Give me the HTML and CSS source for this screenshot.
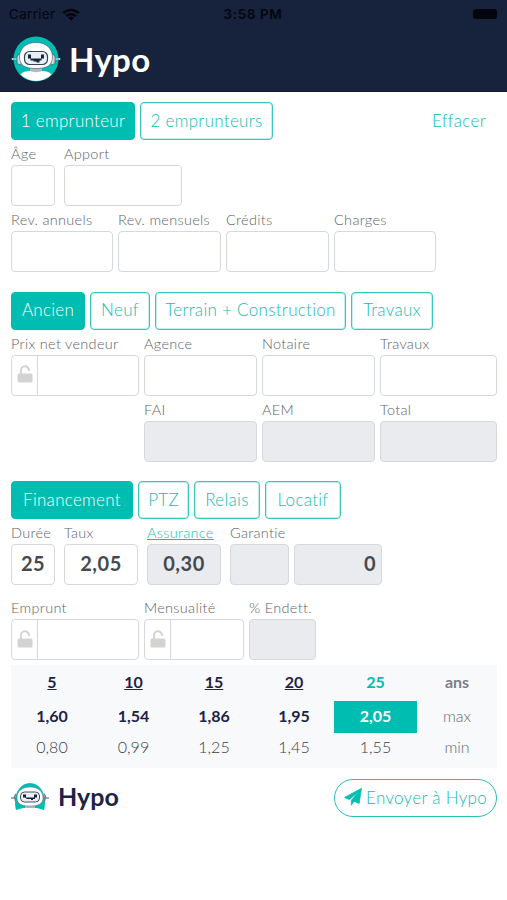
FILE: index.html
```
<!DOCTYPE html>
<html lang="fr">

<head>
    <meta charset="UTF-8">
    <meta name="viewport" content="width=device-width, initial-scale=1.0">
    <title>Hypo</title>
    <link rel="stylesheet" href="styles.css">
</head>

<body>
    <!-- shared icons -->
    <svg class="sprite" width="0" height="0">
        <symbol id="unlock" viewBox="0 0 16 18">
            <path d="M4 9V5.400a4 4 0 0 1 8-.2" fill="none" stroke="currentColor" stroke-width="2" stroke-linecap="round" />
            <rect x=".5" y="8.500" width="15" height="9" rx="1.500" fill="currentColor" />
        </symbol>
        <symbol id="robot" viewBox="0 0 50 46">
            <clipPath id="disc"><circle cx="25" cy="23" r="22" /></clipPath>
            <circle cx="25" cy="23" r="22.500" fill="#00bdb2" />
            <g clip-path="url(#disc)">
                <path d="M19 29h12v8H19z" fill="#aeb9c8" />
                <path d="M7 46c0-8 5-11 12-11 3 1.500 9 1.500 12 0 7 0 12 3 12 11z" fill="#fff" />
            </g>
            <path d="M1 23h6M43 23h6" stroke="#d5dde6" stroke-width="1" />
            <circle cx="1.500" cy="23" r=".9" fill="#d5dde6" />
            <circle cx="48.500" cy="23" r=".9" fill="#d5dde6" />
            <rect x="6" y="18.500" width="5" height="10" rx="2.500" fill="#d5dbe3" stroke="#415064" stroke-width=".7" />
            <rect x="39" y="18.500" width="5" height="10" rx="2.500" fill="#d5dbe3" stroke="#415064" stroke-width=".7" />
            <path d="M25 6.500c10 0 16.500 6 16.500 14.500S36 32.500 25 32.500 8.500 29.500 8.500 21 15 6.500 25 6.500z" fill="#fff" stroke="#415064" stroke-width=".6" />
            <rect x="13.500" y="15.500" width="23" height="13" rx="5" fill="#e8eef5" stroke="#364358" stroke-width="1.200" />
            <path d="M17 18.500h3v4h-3zM30 18.500h3v4h-3zM19.500 22.500h11v2h-2v2h-3v-1h-3v-1h-3z" fill="#17223c" />
        </symbol>
        <symbol id="robot-small" viewBox="0 0 38 30">
            <path d="M5 29C3 21 4 13 8 8 13 0 25 0 30 8c4 5 5 13 3 21l-7-2H12z" fill="#00bdb2" />
            <path d="M0 17h5M33 17h5" stroke="#415064" stroke-width="1.200" />
            <path d="M5 13c-2 2-2 6 1 8M33 13c2 2 2 6-1 8" fill="none" stroke="#748096" stroke-width="1.500" />
            <path d="M14 24h10v3H14z" fill="#aeb9c8" />
            <path d="M19 6c8 0 13 4 13 11 0 6-5 8-13 8S6 23 6 17C6 10 11 6 19 6z" fill="#fff" stroke="#748096" stroke-width=".6" />
            <rect x="9.500" y="11" width="19" height="10" rx="4" fill="#e8eef5" stroke="#415064" />
            <path d="M12 13.500h3v3h-3zM23 13.500h3v3h-3zM14 16.500h10v1.500h-2v1h-2v-1h-4z" fill="#17223c" />
        </symbol>
    </svg>

    <header class="header">
        <div class="status">
            <div class="carrier">
                <span class="carrier-name">Carrier</span>
                <svg class="wifi" viewBox="0 0 18 13">
                    <path d="M1.200 5.200a11 11 0 0 1 15.600 0M4.200 8.200a6.800 6.800 0 0 1 9.600 0" fill="none" stroke="#03060c" stroke-width="2.600" />
                    <path d="M6.200 9.800a4 4 0 0 1 5.600 0L9 12.700z" fill="#03060c" />
                </svg>
            </div>
            <span class="time">3:58 PM</span>
            <div class="battery"></div>
        </div>
        <div class="brand">
            <svg class="brand-logo"><use href="#robot" /></svg>
            <span class="brand-name">Hypo</span>
        </div>
    </header>

    <main class="content">
        <section class="section">
            <div class="tabs tabs-borrower">
                <div class="tab active"><span>1 emprunteur</span></div>
                <div class="tab"><span>2 emprunteurs</span></div>
                <a class="clear">Effacer</a>
            </div>
            <div class="row row-person">
                <div class="field"><span class="label">Âge</span><div class="input"></div></div>
                <div class="field"><span class="label">Apport</span><div class="input"></div></div>
            </div>
            <div class="row row-income">
                <div class="field"><span class="label">Rev. annuels</span><div class="input"></div></div>
                <div class="field"><span class="label">Rev. mensuels</span><div class="input"></div></div>
                <div class="field"><span class="label">Crédits</span><div class="input"></div></div>
                <div class="field"><span class="label">Charges</span><div class="input"></div></div>
            </div>
        </section>

        <section class="section">
            <div class="tabs tabs-project">
                <div class="tab active"><span>Ancien</span></div>
                <div class="tab"><span>Neuf</span></div>
                <div class="tab"><span>Terrain + Construction</span></div>
                <div class="tab"><span>Travaux</span></div>
            </div>
            <div class="row row-price">
                <div class="field">
                    <span class="label">Prix net vendeur</span>
                    <div class="input locked"><div class="lock"><svg><use href="#unlock" /></svg></div></div>
                </div>
                <div class="field"><span class="label">Agence</span><div class="input"></div></div>
                <div class="field"><span class="label">Notaire</span><div class="input"></div></div>
                <div class="field"><span class="label">Travaux</span><div class="input"></div></div>
                <div class="field total-first"><span class="label">FAI</span><div class="input disabled"></div></div>
                <div class="field"><span class="label">AEM</span><div class="input disabled"></div></div>
                <div class="field"><span class="label">Total</span><div class="input disabled"></div></div>
            </div>
        </section>

        <section class="section">
            <div class="tabs tabs-loan">
                <div class="tab active"><span>Financement</span></div>
                <div class="tab"><span>PTZ</span></div>
                <div class="tab"><span>Relais</span></div>
                <div class="tab"><span>Locatif</span></div>
            </div>
            <div class="row row-rate">
                <div class="field"><span class="label">Durée</span><div class="input">25</div></div>
                <div class="field"><span class="label">Taux</span><div class="input">2,05</div></div>
                <div class="field"><a class="label link">Assurance</a><div class="input disabled">0,30</div></div>
                <div class="field"><span class="label">Garantie</span><div class="input disabled"></div></div>
                <div class="field amount"><div class="input disabled right">0</div></div>
            </div>
            <div class="row row-payment">
                <div class="field">
                    <span class="label">Emprunt</span>
                    <div class="input locked"><div class="lock"><svg><use href="#unlock" /></svg></div></div>
                </div>
                <div class="field">
                    <span class="label">Mensualité</span>
                    <div class="input locked"><div class="lock"><svg><use href="#unlock" /></svg></div></div>
                </div>
                <div class="field"><span class="label">% Endett.</span><div class="input disabled"></div></div>
            </div>
        </section>

        <table class="rates">
            <colgroup><col class="c1"><col class="c2"><col class="c3"><col class="c4"><col class="c5"><col class="c6"></colgroup>
            <tr class="years">
                <td><u>5</u></td><td><u>10</u></td><td><u>15</u></td><td><u>20</u></td><td class="current">25</td><td class="unit">ans</td>
            </tr>
            <tr class="max">
                <td>1,60</td><td>1,54</td><td>1,86</td><td>1,95</td><td class="selected">2,05</td><td class="unit">max</td>
            </tr>
            <tr class="min">
                <td>0,80</td><td>0,99</td><td>1,25</td><td>1,45</td><td>1,55</td><td class="unit">min</td>
            </tr>
        </table>

        <footer class="footer">
            <div class="footer-brand">
                <svg class="footer-logo"><use href="#robot-small" /></svg>
                <span class="footer-name">Hypo</span>
            </div>
            <div class="send">
                <svg class="plane" viewBox="0 0 18 18">
                    <path d="M17.500.3 15.200 15.500 10 13.300 7.300 17.300V12.300L14.500 4 5.300 11.600.5 9.500z" fill="#00bdb2" stroke="#00bdb2" stroke-width=".7" stroke-linejoin="round" />
                </svg>
                <span>Envoyer à Hypo</span>
            </div>
        </footer>
    </main>
</body>

</html>
```
FILE: styles.css
```
* {
    box-sizing: border-box;
}

body {
    margin: 0;
    background-color: #fff;
    color: #444a50;
    font-family: Lato, "Liberation Sans", sans-serif;
    font-size: 17px;
    font-variant-ligatures: none;
}

.sprite {
    display: block;
}

.header {
    height: 92px;
    background-color: #17223c;
    border-bottom: 1px solid #0e1730;
}

.status {
    display: grid;
    grid-template-columns: 1fr auto 1fr;
    align-items: center;
    height: 28px;
    padding: 0 10px 0 9px;
    font-family: Inter, sans-serif;
    font-size: 13.500px;
    color: #03060c;
}

.carrier {
    display: flex;
    align-items: center;
    gap: 7px;
}

.carrier-name {
    letter-spacing: 0.3px;
}

.wifi {
    width: 18px;
    height: 13px;
}

.time {
    font-weight: 600;
    letter-spacing: 0.6px;
}

.battery {
    justify-self: end;
    width: 24px;
    height: 10px;
    border-radius: 3px;
    background-color: #03060c;
}

.brand {
    display: flex;
    align-items: center;
    gap: 8px;
    height: 62px;
    padding-left: 11px;
}

.brand-logo {
    width: 50px;
    height: 46px;
}

.brand-name {
    color: #fff;
    font-size: 33px;
    font-weight: bold;
    letter-spacing: 0.3px;
    line-height: 38px;
    padding-bottom: 1px;
}

.content {
    padding: 10px 10px 0 11px;
}

.section {
    margin-bottom: 19.500px;
}

.tabs {
    display: grid;
    gap: 5px;
    height: 38px;
}

.tabs-borrower {
    grid-template-columns: 124px 133px 1fr;
}

.tabs-project {
    grid-template-columns: 74px 60px 191px 82px;
}

.tabs-loan {
    grid-template-columns: 122px 51px 66px 76px;
}

.tab {
    display: flex;
    align-items: center;
    justify-content: center;
    padding-bottom: 2px;
    border: 1px solid #35c7bc;
    border-radius: 4px;
    box-shadow: inset 0 0 0 1px #c6efeb;
    color: #14bcb0;
    font-weight: 300;
    letter-spacing: 0.3px;
    white-space: nowrap;
}

.tab.active {
    border-color: #00bdb2;
    background-color: #00bdb2;
    box-shadow: none;
    color: #fff;
}

.clear {
    align-self: center;
    justify-self: end;
    padding: 0 11px 2px 0;
    color: #14bcb0;
    font-weight: 300;
    letter-spacing: 0.3px;
}

.row {
    display: grid;
    column-gap: 5px;
}

.row-person {
    grid-template-columns: 44px 118px;
    column-gap: 9px;
}

.row-income {
    grid-template-columns: 102px 103px 103px 102px;
}

.row-price {
    grid-template-columns: 128px 113px 113px 117px;
}

.row-rate {
    grid-template-columns: 44px 74px 74px 59px 84px;
    column-gap: 9px;
}

.row-payment {
    grid-template-columns: 128px 100px 67px;
    margin-top: 9px;
}

.total-first {
    grid-column: 2;
}

.amount {
    margin-left: -4px;
    padding-top: 25px;
}

.label {
    display: block;
    height: 25px;
    line-height: 27px;
    font-size: 14.500px;
    font-weight: 300;
    letter-spacing: 0.3px;
    color: #606468;
    white-space: nowrap;
}

.link {
    color: #14bcb0;
    text-decoration: underline;
}

.input {
    display: flex;
    justify-content: center;
    height: 41px;
    border: 1px solid #d5d9dd;
    border-radius: 4px;
    line-height: 36px;
    font-size: 20px;
    font-weight: bold;
    letter-spacing: 0.5px;
}

.disabled {
    background-color: #e9ebee;
}

.right {
    justify-content: flex-end;
    padding-right: 5px;
}

.locked {
    justify-content: flex-start;
}

.lock {
    display: flex;
    align-items: center;
    justify-content: center;
    width: 26px;
    padding-bottom: 2px;
    border-right: 1px solid #d5d9dd;
    color: #d3d3d3;
}

.lock svg {
    width: 16px;
    height: 18px;
}

.rates {
    width: 486px;
    height: 103px;
    margin-top: -14.500px;
    border-collapse: collapse;
    border-bottom: 5px solid #f8f9fb;
    table-layout: fixed;
    background-color: #f8f9fb;
    font-size: 16px;
    text-align: center;
}

.rates td {
    padding: 0 0 2px;
}

.years {
    height: 35px;
    color: #1c2346;
    font-weight: bold;
}

.max {
    height: 31px;
    color: #1c2346;
    font-weight: bold;
}

.min {
    height: 32px;
    color: #3c4046;
    font-weight: 300;
}

.years .current {
    color: #00bdb2;
}

.max .selected {
    background-color: #00bdb2;
    color: #fff;
}

.years .unit {
    color: #7a7f86;
}

.max .unit,
.min .unit {
    color: #666a70;
    font-weight: 300;
}

.c1 {
    width: 82px;
}

.c2 {
    width: 81px;
}

.c3 {
    width: 80px;
}

.c4 {
    width: 80px;
}

.c5 {
    width: 83px;
}

.c6 {
    width: 80px;
}

.footer {
    display: flex;
    justify-content: space-between;
    padding-top: 11px;
}

.footer-brand {
    display: flex;
    align-items: center;
    gap: 9px;
    height: 34px;
}

.footer-logo {
    width: 38px;
    height: 30px;
}

.footer-name {
    color: #1c2346;
    font-size: 25px;
    font-weight: bold;
}

.send {
    display: flex;
    align-items: center;
    justify-content: center;
    gap: 4px;
    width: 163px;
    height: 38px;
    padding-bottom: 2px;
    border: 1px solid #27c1b6;
    border-radius: 19px;
    color: #14bcb0;
    font-weight: 300;
    letter-spacing: 0.3px;
    white-space: nowrap;
}

.plane {
    width: 18px;
    height: 18px;
}
```
